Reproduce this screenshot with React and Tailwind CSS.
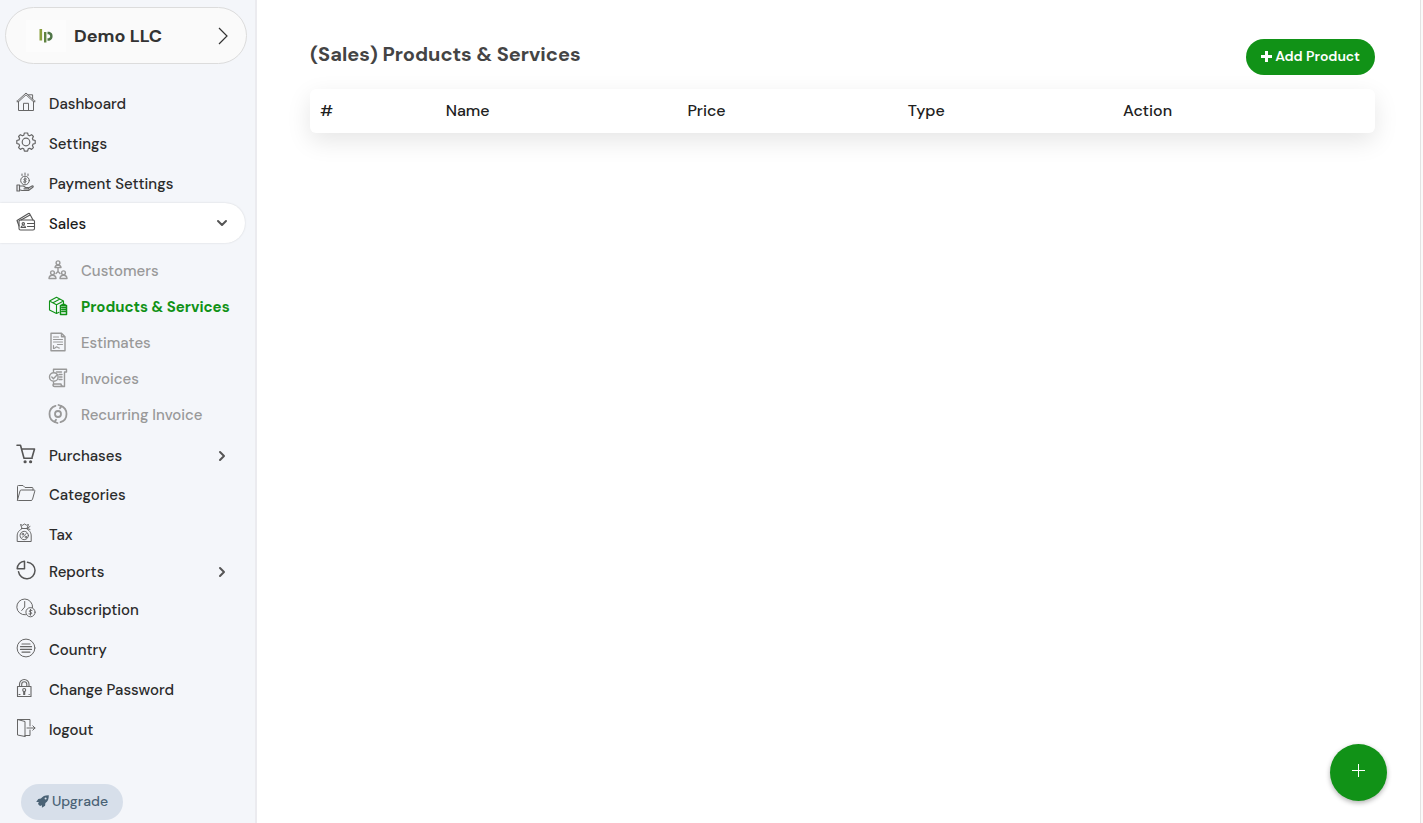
import React, { useState } from "react";
import { ChevronDown, ChevronRight } from "lucide-react";

function Icon({ children, width = 1 }) {
    return (
        <svg viewBox="0 0 20 20" className="size-5 shrink-0" fill="none" stroke="currentColor" strokeWidth={width} strokeLinecap="round" strokeLinejoin="round" aria-hidden="true">
            {children}
        </svg>
    );
}

const HomeIcon = () => (
    <Icon>
        <path d="M1 9.3 10 1l9 8.3M1 9.3l1 .9 8-7.4 8 7.4 1-.9M12.6 2.8h4v4" />
        <path d="M2.5 9.8v8.7h15V9.8M7.5 18.3v-7h5v7" />
    </Icon>
);

const GearIcon = () => (
    <Icon width={1.2}>
        <path d="M8.4 1h3.2l.6 2.2 1.4.6 2-1.1 1.8 1.8-1 2 .6 1.4 2.2.6v3l-2.2.6-.6 1.5 1 2-1.8 1.8-2-1.1-1.4.6-.6 2.2H8.4l-.6-2.2-1.4-.6-2 1.1-1.8-1.8 1-2-.6-1.5L.8 11.5v-3L3 7.9l.6-1.4-1-2 1.8-1.8 2 1.1 1.4-.6z" />
        <circle cx="10" cy="10" r="3.8" />
    </Icon>
);

const PaymentIcon = () => (
    <Icon>
        <circle cx="9" cy="8.5" r="4.3" />
        <path d="M9 1v2M6 2v1.500M12 2v1.500M9 5.800v5.400M10.500 7c-2.800-1-3.500 1-1.500 1.500s1.300 2.500-1.500 1.500" />
        <path d="M1 13h2.500v6H1zM3.500 14h4l2 1.500H12c1 0 1 1.300 0 1.300H8M12.500 16l3.500-2c1.200-.4 1.600.6.8 1.200L12.500 18.500H6l-2.500-.8" strokeWidth="1.200" />
    </Icon>
);

const SalesIcon = () => (
    <Icon width={1.1}>
        <rect x="3" y="8" width="15.5" height="10" rx="1.5" />
        <path d="M3 14 1 8.5l11.500-7c.6-.3 1 0 1.300.5l3.200 6M5 8l9-5" />
        <circle cx="7.3" cy="11.8" r="1.2" />
        <path d="M5 15.5c.3-2.400 4.300-2.400 4.600 0zM11.500 11.500H18M11.500 14.500H18" />
    </Icon>
);

const CustomersIcon = () => (
    <Icon width={1.4}>
        <circle cx="10" cy="2.8" r="1.9" />
        <path d="M7 7.600c.2-3.200 5.800-3.200 6 0zM10 8v3.500M10 11.500l-2 2M10 11.500l2 2" />
        <circle cx="4.5" cy="12.8" r="1.9" />
        <path d="M1 18.5c.2-4.400 6.800-4.400 7 0z" />
        <circle cx="15.5" cy="12.8" r="1.9" />
        <path d="M12 18.5c.2-4.400 6.800-4.400 7 0z" />
    </Icon>
);

const ProductsIcon = () => (
    <Icon width={1.1}>
        <path d="M11 16.300 8.500 17.500 1.500 14V5l7-3.800L15.500 5v3M1.500 5l7 3.700L15.500 5M8.500 8.700v8.800M5 6.800l7-3.700" />
        <path d="M12.500 9.500h6v9h-6zM14 11.500h4M14 13.500h4M14 15.500h4M14 8.500h3" strokeWidth="1.500" />
    </Icon>
);

const EstimatesIcon = () => (
    <Icon width={1.4}>
        <path d="M3 1.200h10.500L17 4.700v14H3zM13.500 1.200v3.500H17" />
        <path d="M5.500 5h5M5.500 7.500h9M5.500 10h9M9.500 12.500h5M5.500 13.500v3M5.500 16.500c2 .3 2-2 3.500-1.500s1.500 1.200 2.500 1" strokeWidth="1.200" />
    </Icon>
);

const InvoicesIcon = () => (
    <Icon width={1.4}>
        <path d="M5.500 3.500V1.200H18.500V4H16.500M16.500 4v14.500H6.500M5.500 14.500v2.500M6.500 18.500c-2 0-2-2.500-.5-2.500h7c0 1.500.6 2.500 3 2.500" />
        <circle cx="5.800" cy="9" r="4.300" />
        <path d="m3.800 9 1.600 1.700L9 7M8.500 4h5M11 6.500h3M11.500 9H14M11 11.500h3" />
    </Icon>
);

const RecurringIcon = () => (
    <Icon width={1.8}>
        <path d="M7.500 1.800A8.600 8.600 0 0 0 7.500 18.200M12.500 18.200A8.600 8.600 0 0 0 12.500 1.800" />
        <path d="M10.500 1l3 1-1.500 2.300M9.500 19l-3-1L8 15.700" />
        <circle cx="10" cy="10" r="3" />
    </Icon>
);

const CartIcon = () => (
    <Icon width={1.6}>
        <path d="M1 1.300h3.500L8 14.200h8.200M5.500 5H18.500l-2.300 8" />
        <path d="M9 17.800h.2M14.500 17.800h.2" strokeWidth="3" />
    </Icon>
);

const FolderIcon = () => (
    <Icon>
        <path d="M1.500 17V3.500c0-.8.300-1 1-1h4.500l2 2h7c.8 0 1 .3 1 1V7" />
        <path d="M1.500 17 4 8c.3-.8.600-1 1.300-1H18c.8 0 1 .4.8 1.100l-2.300 8.200c-.3.900-.7 1.200-1.500 1.200H2.300c-.5 0-.8-.1-.8-.5z" />
    </Icon>
);

const TaxIcon = () => (
    <Icon>
        <path d="M5.500 5.500h6M6 5.300 4.500 1.500l2 .8L8.500 1l2 1.200 2-.7L11 5.300M11.500 5l2.500-1.500M11.500 5.500l2.500 1" />
        <path d="M5.500 6C2 8 1.200 10.500 1.200 13v5.500h14V13c0-2.500-.8-5-4.200-7" />
        <circle cx="8.200" cy="12.500" r="4.200" />
        <path d="m6.200 14.500 4-4" />
        <circle cx="6.700" cy="11" r=".8" />
        <circle cx="9.800" cy="14" r=".8" />
    </Icon>
);

const ReportsIcon = () => (
    <Icon width={1.5}>
        <path d="M8.500 1.200v7.500H1.200C1.300 4.500 4.500 1.400 8.500 1.200z" />
        <path d="M11.500 2.200a8.300 8.300 0 1 1-9 9.500" />
    </Icon>
);

const SubscriptionIcon = () => (
    <Icon>
        <path d="M9.500 16.800A7.900 7.900 0 1 1 16.600 9.500M8.700 3.500V9l-3 3.500" />
        <circle cx="14.500" cy="14.200" r="4.600" />
        <path d="M16 12.500c-2.800-1-3.700 1.200-1.500 1.700s1.500 2.600-1.500 1.700M14.500 11.300v5.900" />
    </Icon>
);

const CountryIcon = () => (
    <Icon>
        <circle cx="10" cy="10" r="8.9" />
        <path d="M6 6h8M4.500 8.700h11M4.500 11.400h11M6 14.100h8" strokeWidth="1.2" />
    </Icon>
);

const LockIcon = () => (
    <Icon width={1.1}>
        <path d="M1.500 8.500h13.500v10H1.500zM3.500 8.300V6.200a4.700 4.700 0 0 1 9.500 0v2.100M5.700 8.300V6.300a2.500 2.500 0 0 1 5.100 0v2" />
        <circle cx="8.200" cy="12" r="1.5" />
        <path d="M7.700 13.500v3h1v-3M13 16.500h.3M3 16.500h1" />
    </Icon>
);

const LogoutIcon = () => (
    <Icon>
        <path d="M9 18.500 1.500 17V1.500h12.500V8M1.500 1.500 9 3.500v15M9 17.500h5V12M11 10h8M16.800 7.800 19 10l-2.200 2.200" />
    </Icon>
);

const RocketIcon = () => (
    <svg viewBox="0 0 13 13" className="size-[13px]" fill="currentColor" aria-hidden="true">
        <path fillRule="evenodd" d="M12.800.2C9 .1 6.600 1.200 4.900 3.600L2.300 3.900.2 7.100l2.600-.1-.8 2 2 2 2-.8-.1 2.600 3.200-2.100.300-2.600C11.800 6.400 12.900 4 12.800.2zM9.600 2.500a1 1 0 1 1 0 2 1 1 0 0 1 0-2z" />
    </svg>
);

const salesItems = [
    { label: "Customers", icon: CustomersIcon },
    { label: "Products & Services", icon: ProductsIcon, active: true },
    { label: "Estimates", icon: EstimatesIcon },
    { label: "Invoices", icon: InvoicesIcon },
    { label: "Recurring Invoice", icon: RecurringIcon },
];

const columns = [
    { label: "#", width: "w-[11.8%]" },
    { label: "Name", width: "w-[22.7%]" },
    { label: "Price", width: "w-[20.7%]" },
    { label: "Type", width: "w-[20.2%]" },
    { label: "Action", width: "w-[24.6%]" },
];

function NavLink({ icon: IconComp, label }) {
    return (
        <a href="#" className="flex h-10 items-center gap-[13px] pl-4">
            <span className="pb-0.5 text-[#666]"><IconComp /></span>
            <span className="pt-0.5">{label}</span>
        </a>
    );
}

function NavGroup({ icon: IconComp, label, className }) {
    return (
        <button type="button" className={`flex w-full items-center gap-[13px] pl-4 pr-[25px] text-left ${className}`}>
            <span className="pb-1 text-[#555]"><IconComp /></span>
            <span className="flex-1 pt-0.5">{label}</span>
            <ChevronRight className="size-4 text-[#555]" strokeWidth={3} />
        </button>
    );
}

function Sidebar() {
    const [open, setOpen] = useState(true);

    return (
        <aside className="flex w-[257px] shrink-0 flex-col border-r-2 border-[#ebebef] bg-[#f4f6fa] text-[15px] font-medium text-[#2b2b2b]">
            <button type="button" className="ml-[5px] mr-2 mt-[7px] flex h-[57px] items-center rounded-full border border-[#dcdcdc] bg-[#fafafa] pl-5 pr-[17px]">
                <span className="flex h-8 w-10 items-center justify-center bg-[#fcfcfc]">
                    <svg viewBox="0 0 16 16" className="size-4" fill="none" aria-hidden="true">
                        <rect x="1.5" y="1" width="2.6" height="11.5" fill="#8a9f3c" />
                        <rect x="6" y="4" width="2.4" height="10.5" fill="#5f8240" />
                        <path d="M9.500 5h1.500a3.400 3.400 0 0 1 0 6.500H9.500" stroke="#4f7547" strokeWidth="2.4" />
                    </svg>
                </span>
                <span className="ml-2 flex-1 text-left text-lg font-bold text-[#333]">Demo LLC</span>
                <svg viewBox="0 0 12 18" className="h-[18px] w-3" fill="none" stroke="#333" strokeWidth="1.2" aria-hidden="true">
                    <path d="m2 1 8 8-8 8" />
                </svg>
            </button>

            <nav className="mt-[19px]">
                <NavLink icon={HomeIcon} label="Dashboard" />
                <NavLink icon={GearIcon} label="Settings" />
                <NavLink icon={PaymentIcon} label="Payment Settings" />
                <button
                    type="button"
                    aria-expanded={open}
                    onClick={() => setOpen(!open)}
                    className="flex h-10 w-[245px] items-center gap-[13px] rounded-r-full bg-white pl-4 pr-[15px] text-left text-[#1a1a1a] shadow-[0_0_2px_rgba(0,0,0,0.15)]"
                >
                    <span className="pb-0.5 text-[#555]"><SalesIcon /></span>
                    <span className="flex-1 pt-0.5">Sales</span>
                    <ChevronDown className="size-4 text-[#555]" strokeWidth={3} />
                </button>
                {open && (
                    <ul className="mt-2.5">
                        {salesItems.map(({ label, icon: IconComp, active }) => (
                            <li key={label}>
                                <a href="#" className={`flex h-9 items-center gap-[13px] whitespace-nowrap pl-12 ${active ? "font-bold text-[#119217]" : "text-[#999]"}`}>
                                    <span className="pb-0.5"><IconComp /></span>
                                    {label}
                                </a>
                            </li>
                        ))}
                    </ul>
                )}
                <NavGroup icon={CartIcon} label="Purchases" className="mt-1 h-[37px]" />
                <NavLink icon={FolderIcon} label="Categories" />
                <NavLink icon={TaxIcon} label="Tax" />
                <NavGroup icon={ReportsIcon} label="Reports" className="h-[35px]" />
                <NavLink icon={SubscriptionIcon} label="Subscription" />
                <NavLink icon={CountryIcon} label="Country" />
                <NavLink icon={LockIcon} label="Change Password" />
                <NavLink icon={LogoutIcon} label="logout" />
            </nav>

            <button type="button" className="ml-[21px] mt-[35px] flex h-9 items-center gap-[3px] self-start rounded-full bg-[#d7dfea] px-[15px] pb-0.5 text-sm text-[#4a6275]">
                <RocketIcon />
                Upgrade
            </button>
        </aside>
    );
}

export default function App() {
    return (
        <div className="flex min-h-screen bg-white font-['DM_Sans','Inter',sans-serif]">
            <Sidebar />
            <main className="min-w-0 flex-1 border-r border-[#e3e3e3] pl-[53px] pr-[45px] pt-[39px]">
                <div className="flex items-start justify-between">
                    <h1 className="pt-px text-xl font-bold text-[#444]">(Sales) Products &amp; Services</h1>
                    <button type="button" className="flex h-9 items-center gap-[3px] rounded-full bg-[#119217] px-[15px] pb-0.5 text-sm font-semibold text-white">
                        <svg viewBox="0 0 11 11" className="size-[11px]" stroke="currentColor" strokeWidth="3" aria-hidden="true">
                            <path d="M5.500 0v11M0 5.500h11" />
                        </svg>
                        Add Product
                    </button>
                </div>

                <table className="mt-3.5 w-full table-fixed rounded-md bg-white text-left text-base text-[#212121] shadow-[0_8px_24px_rgba(0,0,0,0.1)]">
                    <thead>
                        <tr className="h-11">
                            {columns.map((col) => (
                                <th key={col.label} scope="col" className={`px-2.5 font-medium ${col.width}`}>{col.label}</th>
                            ))}
                        </tr>
                    </thead>
                </table>
            </main>
            <div className="w-0.5 shrink-0 bg-[#fafafa]" />

            <button type="button" aria-label="Add" className="fixed bottom-[22px] right-9 flex size-[57px] items-center justify-center rounded-full bg-[#119217] pb-1 shadow-[0_2px_5px_rgba(0,0,0,0.3)]">
                <svg viewBox="0 0 14 14" className="size-3.5" stroke="#fff" aria-hidden="true">
                    <path d="M6.500 0v13M0 6.500h13" />
                </svg>
            </button>
        </div>
    );
}
